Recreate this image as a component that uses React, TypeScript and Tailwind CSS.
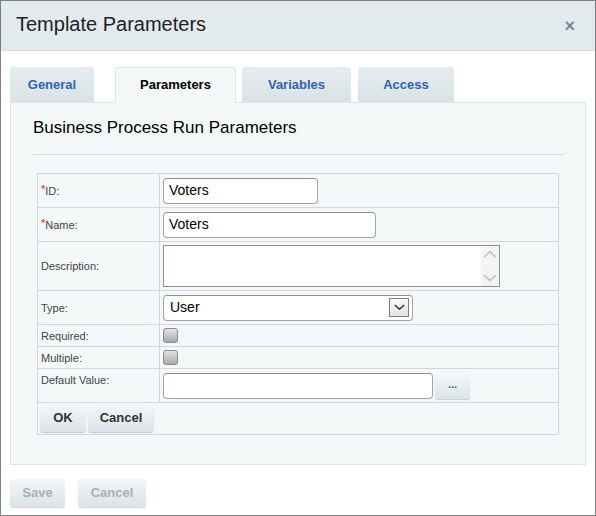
import React from "react";

const font = { fontFamily: '"Liberation Sans", Arial, sans-serif' };

function Btn({ children, w, className = "" }: { children: React.ReactNode; w: string; className?: string }) {
  return (
    <div
      className={`flex items-center justify-center rounded-[3px] bg-gradient-to-b from-[#f3f6f7] to-[#dbe4e7] shadow-[0_1px_1px_rgba(0,0,0,0.18)] text-[13px] leading-[16px] font-bold ${w} ${className}`}
    >
      {children}
    </div>
  );
}

function Chevron({ up, color, size = 14 }: { up?: boolean; color: string; size?: number }) {
  return (
    <svg width={size} height={size * 0.6} viewBox="0 0 14 8" fill="none">
      <path
        d={up ? "M1 7 L7 1.5 L13 7" : "M1 1 L7 6.5 L13 1"}
        stroke={color}
        strokeWidth="1.6"
      />
    </svg>
  );
}

function Checkbox() {
  return (
    <div className="w-[15px] h-[15px] rounded-[3px] border border-[#8c8c8c] bg-gradient-to-b from-[#e4e4e4] to-[#a9a9a9]" />
  );
}

function Label({ children, req }: { children: React.ReactNode; req?: boolean }) {
  return (
    <span className="text-[11px] leading-[14px] text-[#444]">
      {req && <span className="text-[#e02020] relative -top-[2px]">*</span>}
      {children}
    </span>
  );
}

const inputCls =
  "h-[26px] rounded-[4px] border border-[#a3a3a3] border-t-[#8e8e8e] bg-white text-[14px] leading-[18px] text-black pl-[5px] pb-[1px] flex items-center";

const td = "border border-[#d2d5e8] pl-[3px] p-0";

export default function App() {
  return (
    <div style={font} className="w-[596px] h-[516px] border border-[#7f7f7f] bg-white flex flex-col">
      {/* header */}
      <div className="h-[50px] shrink-0 bg-[#e2eaed] border-b border-[#d3dde1] flex items-center justify-between pl-[15px] pr-[20px]">
        <span className="text-[20px] text-[#222] pb-[3px]">Template Parameters</span>
        <span className="text-[18px] text-[#7a8898] font-bold leading-none">×</span>
      </div>

      <div className="pl-[9px] pr-[9px] flex flex-col">
        {/* tabs */}
        <div className="flex items-end mt-[16px] h-[35px]">
          <div className="w-[84px] h-[35px] rounded-t-[3px] bg-gradient-to-b from-[#e7edef] to-[#d8e2e5] flex items-center justify-center text-[13px] font-bold text-[#3264ae]">
            General
          </div>
          <div className="ml-[21px] w-[121px] h-[36px] -mb-[1px] relative z-10 rounded-t-[3px] bg-[#f5f8f9] border border-b-0 border-[#dde4e8] flex items-center justify-center text-[13px] font-bold text-black pb-[1px]">
            Parameters
          </div>
          <div className="ml-[6px] w-[109px] h-[35px] rounded-t-[3px] bg-gradient-to-b from-[#e7edef] to-[#d8e2e5] flex items-center justify-center text-[13px] font-bold text-[#3264ae]">
            Variables
          </div>
          <div className="ml-[7px] w-[96px] h-[35px] rounded-t-[3px] bg-gradient-to-b from-[#e7edef] to-[#d8e2e5] flex items-center justify-center text-[13px] font-bold text-[#3264ae]">
            Access
          </div>
        </div>

        {/* panel */}
        <div className="h-[363px] bg-[#f5f8f9] border border-[#dde4e8] pl-[22px] pr-[22px] flex flex-col">
          <div className="h-[52px] border-b border-[#d6dde2] flex items-center">
            <span className="text-[17px] text-black pb-[1px]">Business Process Run Parameters</span>
          </div>

          <table className="mt-[18px] ml-[4px] w-[522px] border-collapse text-[11px] leading-[14px]">
            <tbody>
              <tr className="h-[34px]">
                <td className={`w-[122px] ${td}`}>
                  <Label req>ID:</Label>
                </td>
                <td className={td}>
                  <div className={`${inputCls} w-[155px]`}>Voters</div>
                </td>
              </tr>
              <tr className="h-[34px]">
                <td className={td}>
                  <Label req>Name:</Label>
                </td>
                <td className={td}>
                  <div className={`${inputCls} w-[213px]`}>Voters</div>
                </td>
              </tr>
              <tr className="h-[49px]">
                <td className={td}>
                  <Label>Description:</Label>
                </td>
                <td className={td}>
                  <div className="w-[337px] h-[42px] border border-[#8f8f8f] bg-white flex justify-end">
                    <div className="w-[18px] h-full bg-[#f4f4f4] flex flex-col items-center justify-between py-[4px]">
                      <Chevron up color="#c4c4c4" />
                      <Chevron color="#c4c4c4" />
                    </div>
                  </div>
                </td>
              </tr>
              <tr className="h-[34px]">
                <td className={td}>
                  <Label>Type:</Label>
                </td>
                <td className={td}>
                  <div className={`${inputCls} w-[250px] justify-between pr-[3px] pl-[6px]`}>
                    <span>User</span>
                    <div className="w-[20px] h-[19px] border border-[#7d7d7d] bg-gradient-to-b from-[#fafafa] to-[#e4e4e4] flex items-center justify-center">
                      <Chevron color="#1a1f4a" size={11} />
                    </div>
                  </div>
                </td>
              </tr>
              <tr className="h-[22px]">
                <td className={td}>
                  <Label>Required:</Label>
                </td>
                <td className={td}>
                  <Checkbox />
                </td>
              </tr>
              <tr className="h-[22px]">
                <td className={td}>
                  <Label>Multiple:</Label>
                </td>
                <td className={td}>
                  <Checkbox />
                </td>
              </tr>
              <tr className="h-[34px]">
                <td className={`${td} align-top pt-[4px]`}>
                  <Label>Default Value:</Label>
                </td>
                <td className={td}>
                  <div className="flex items-center gap-[2px]">
                    <div className={`${inputCls} w-[270px]`} />
                    <Btn w="w-[35px] h-[24px] mt-[2px]">
                      <span className="text-[#45597a] text-[11px] leading-none pb-[4px]">...</span>
                    </Btn>
                  </div>
                </td>
              </tr>
              <tr className="h-[32px]">
                <td colSpan={2} className="border border-[#d2d5e8] pl-[2px]">
                  <div className="flex gap-[2px]">
                    <Btn w="w-[46px] h-[27px] text-[#333] pb-[2px]">OK</Btn>
                    <Btn w="w-[66px] h-[27px] text-[#333] pb-[2px]">Cancel</Btn>
                  </div>
                </td>
              </tr>
            </tbody>
          </table>
        </div>

        {/* footer */}
        <div className="flex gap-[13px] mt-[14px]">
          <Btn w="w-[55px] h-[28px] text-[#a9b0b4]">Save</Btn>
          <Btn w="w-[68px] h-[28px] text-[#a9b0b4]">Cancel</Btn>
        </div>
      </div>
    </div>
  );
}
